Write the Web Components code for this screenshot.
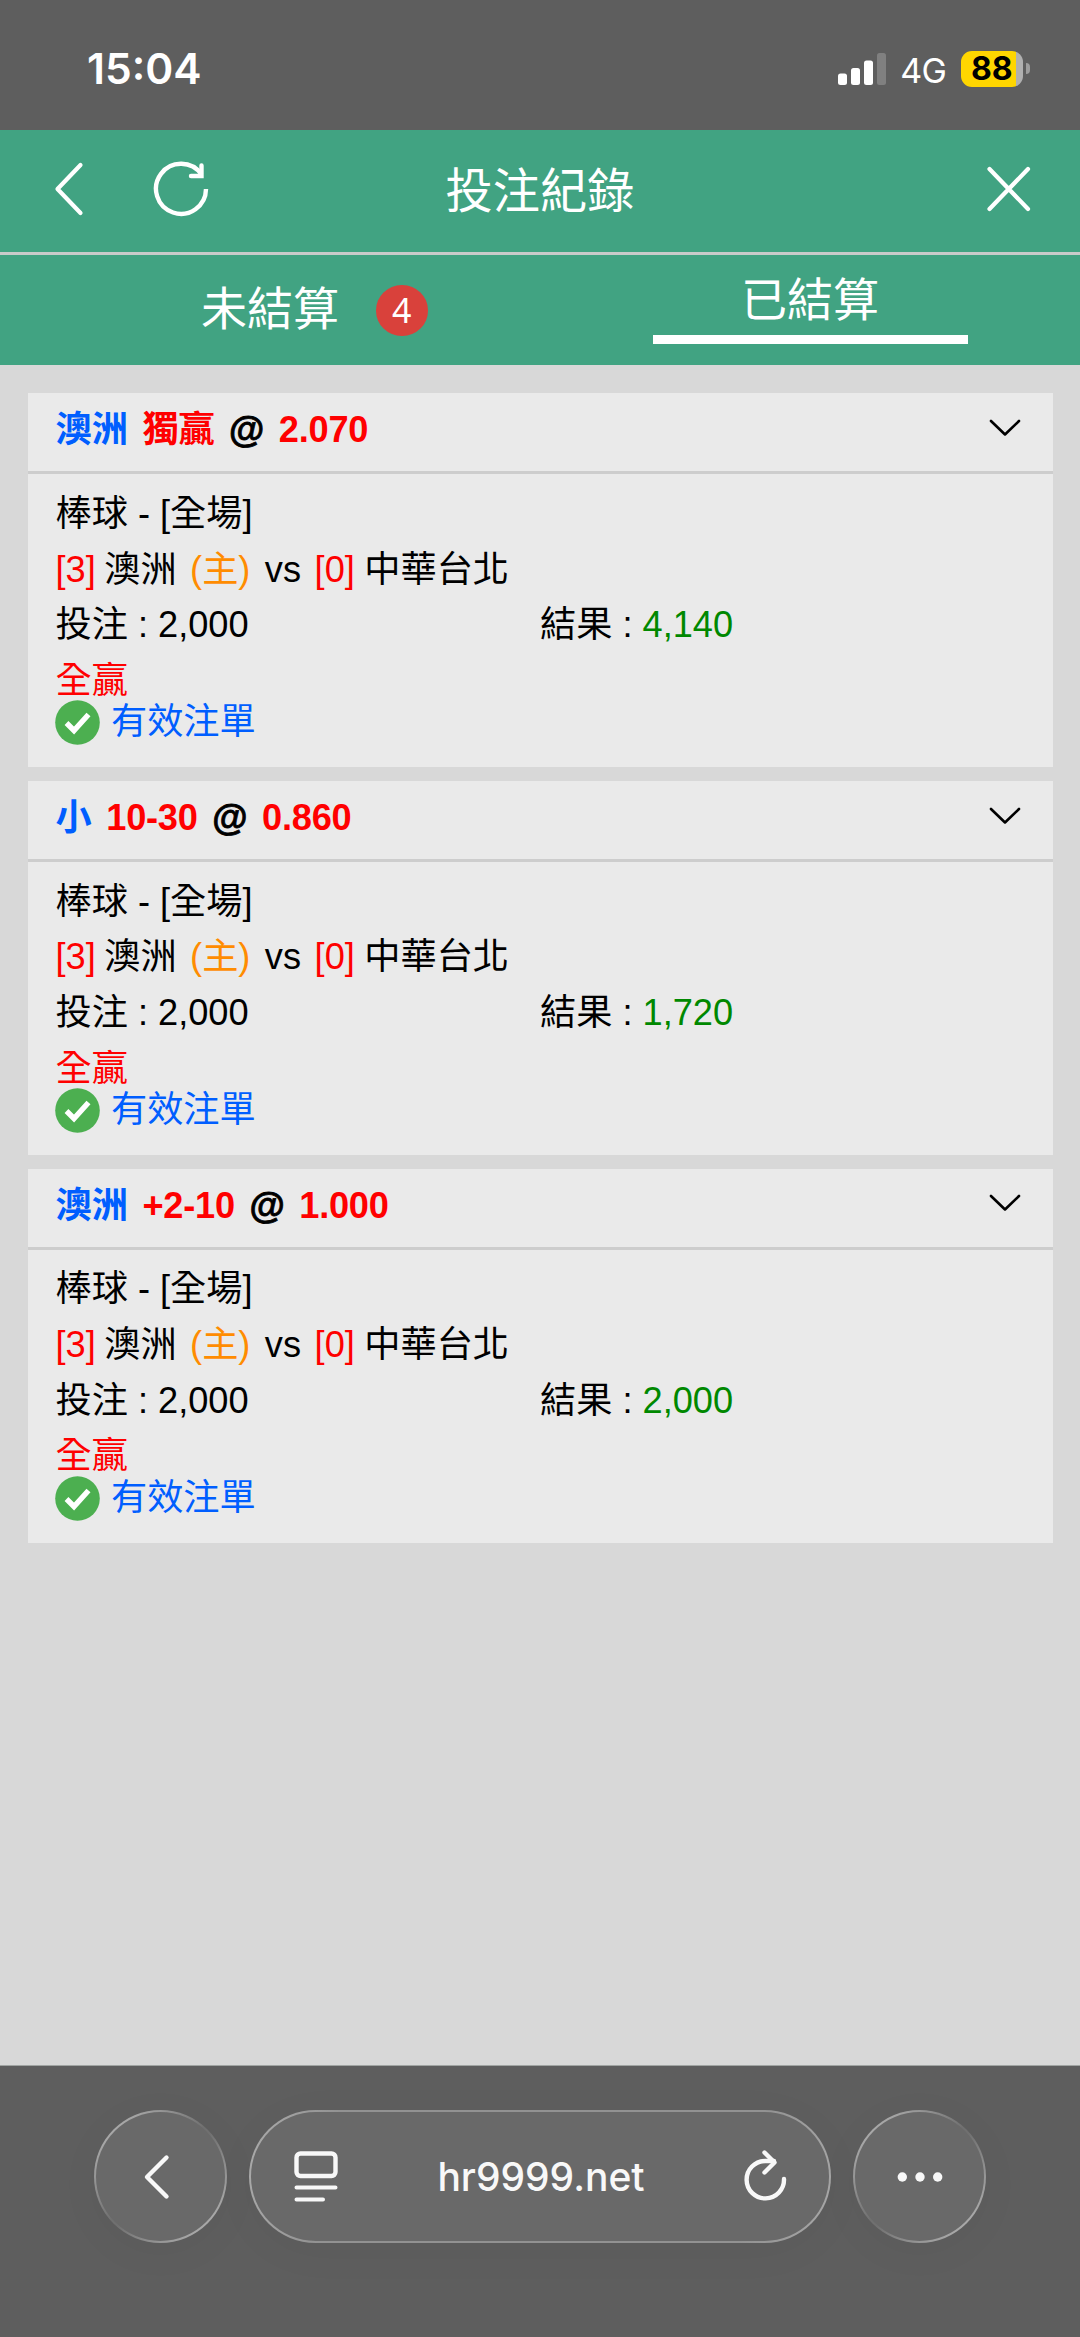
<!DOCTYPE html>
<html lang="zh-Hant">
<head>
<meta charset="utf-8">
<title>投注紀錄</title>
<style>
	body {
		margin: 0;
		background-color: #d8d8d8;
		font-family: "Liberation Sans", "Noto Sans CJK TC", sans-serif;
	}
	bet-app {
		--green: #41a382;
		--chrome: #5e5e5e;
	}
</style>
</head>
<body>

<bet-app>
	<status-bar slot="top" time="15:04" network="4G" battery="88"></status-bar>
	<page-header slot="top">投注紀錄</page-header>
	<tab-bar slot="top">
		<tab-item count="4">未結算</tab-item>
		<tab-item selected>已結算</tab-item>
	</tab-bar>

	<bet-card team="澳洲" pick="獨贏" odds="2.070" stake="2,000" result="4,140"></bet-card>
	<bet-card team="小" pick="10-30" odds="0.860" stake="2,000" result="1,720"></bet-card>
	<bet-card team="澳洲" pick="+2-10" odds="1.000" stake="2,000" result="2,000"></bet-card>

	<browser-bar slot="bottom">hr9999.net</browser-bar>
</bet-app>

<script>
// Attaches an open shadow root filled with the given markup
function render(el, html) {
	let tmpl = document.createElement('template');
	tmpl.innerHTML = html;
	el.attachShadow({mode: 'open'}).appendChild(tmpl.content.cloneNode(true));
}

class BetApp extends HTMLElement {

	constructor() {
		super();
		render(this, `
			<style>
				:host {
					display: flex;
					flex-direction: column;
					height: 2337px;
				}
				main {
					box-sizing: border-box;
					display: flex;
					flex: 1;
					flex-direction: column;
					gap: 13.7px;
					padding: 28px 27.5px 0;
				}
			</style>
			<slot name="top"></slot>
			<main><slot></slot></main>
			<slot name="bottom"></slot>
		`);
	}

}

class StatusBar extends HTMLElement {

	constructor() {
		super();
		render(this, `
			<style>
				:host {
					align-items: center;
					background-color: var(--chrome);
					box-sizing: border-box;
					color: #fff;
					display: flex;
					font-family: Inter, sans-serif;
					height: 130px;
					justify-content: space-between;
					padding: 7px 50.5px 0 87px;
				}
				.time {
					font-size: 42.5px;
					font-weight: 600;
				}
				.right {
					align-items: center;
					display: flex;
				}
				.network {
					font-size: 34px;
					letter-spacing: -0.5px;
					margin: 3px 14px 0 14px;
				}
				.battery {
					align-items: center;
					background: linear-gradient(90deg, #ffd600 55px, #b0b0b0 55px);
					border-radius: 11px;
					color: #000;
					display: flex;
					font-size: 32px;
					font-weight: 700;
					height: 36px;
					justify-content: center;
					width: 62.5px;
				}
				.nub {
					background-color: #9d9d9d;
					border-radius: 0 5px 5px 0;
					height: 11px;
					margin-left: 2.5px;
					width: 4px;
				}
			</style>
			<span class="time"></span>
			<div class="right">
				<svg width="48" height="33" fill="#fff">
					<rect x="0" y="21.5" width="9" height="11.5" rx="2.5"/>
					<rect x="13" y="16" width="9" height="17" rx="2.5"/>
					<rect x="26" y="8.5" width="9" height="24.5" rx="2.5"/>
					<rect x="39" y="1" width="9" height="32" rx="2.5" fill="#808080"/>
				</svg>
				<span class="network"></span>
				<span class="battery"></span>
				<span class="nub"></span>
			</div>
		`);
	}

	connectedCallback() {
		this.shadowRoot.querySelector('.time').textContent = this.getAttribute('time');
		this.shadowRoot.querySelector('.network').textContent = this.getAttribute('network');
		this.shadowRoot.querySelector('.battery').textContent = this.getAttribute('battery');
	}

}

class PageHeader extends HTMLElement {

	constructor() {
		super();
		render(this, `
			<style>
				:host {
					align-items: center;
					background-color: var(--green);
					border-bottom: 3px solid #c9cbca;
					box-sizing: border-box;
					color: #fff;
					display: grid;
					grid-template-columns: 1fr auto 1fr;
					height: 125px;
					padding: 0 48px 0 54px;
				}
				.left {
					display: flex;
					gap: 69px;
					padding-bottom: 4px;
				}
				h1 {
					font-size: 47.2px;
					font-weight: 400;
					line-height: 60px;
					margin: 2px 6px 0 0;
				}
				.close {
					justify-self: end;
					padding-bottom: 4px;
				}
				svg {
					display: block;
				}
			</style>
			<div class="left">
				<svg width="30" height="56" fill="none" stroke="#fff" stroke-width="4.2" stroke-linecap="round" stroke-linejoin="round">
					<path d="M26.5 4 3.5 28l23 24"/>
				</svg>
				<svg width="56" height="56" fill="none" stroke="#fff" stroke-width="4.4">
					<path d="M53 28A25 25 0 1 1 48.5 13.5"/>
					<path d="M48.5 4.5V15H38" stroke-linecap="round"/>
				</svg>
			</div>
			<h1><slot></slot></h1>
			<svg class="close" width="46" height="46" fill="none" stroke="#fff" stroke-width="4.2" stroke-linecap="round">
				<path d="M3.5 3 42 43M42 3 3.5 43"/>
			</svg>
		`);
	}

}

class TabBar extends HTMLElement {

	constructor() {
		super();
		render(this, `
			<style>
				:host {
					background-color: var(--green);
					display: grid;
					grid-template-columns: 1fr 1fr;
					height: 110.4px;
				}
			</style>
			<slot></slot>
		`);
	}

}

class TabItem extends HTMLElement {

	constructor() {
		super();
		render(this, `
			<style>
				:host {
					align-items: center;
					color: #fff;
					display: flex;
					flex-direction: column;
					font-size: 46px;
					font-weight: 400;
					padding-top: 24px;
				}
				:host([selected]) {
					padding-top: 15px;
				}
				.label {
					line-height: 60px;
					position: relative;
				}
				.count {
					background-color: #d9413b;
					border-radius: 50%;
					display: none;
					font-family: "Noto Sans", sans-serif;
					font-size: 34px;
					font-weight: 400;
					height: 50.5px;
					left: 175px;
					line-height: 50px;
					position: absolute;
					text-align: center;
					top: 6px;
					width: 51.5px;
				}
				:host([count]) .count {
					display: block;
				}
				.line {
					background-color: #fff;
					display: none;
					height: 8.5px;
					margin-top: 5px;
					width: 315px;
				}
				:host([selected]) .line {
					display: block;
				}
			</style>
			<span class="label"><slot></slot><span class="count"></span></span>
			<span class="line"></span>
		`);
	}

	connectedCallback() {
		this.shadowRoot.querySelector('.count').textContent = this.getAttribute('count') || '';
	}

}

class BetCard extends HTMLElement {

	constructor() {
		super();
		render(this, `
			<style>
				:host {
					background-color: #eaeaea;
					box-sizing: border-box;
					color: #000;
					display: block;
					font-size: 36.2px;
					height: 374px;
				}
				header {
					align-items: center;
					border-bottom: 3px solid #cdcdcd;
					box-sizing: border-box;
					display: flex;
					font-weight: 700;
					gap: 14.6px;
					height: 81px;
					line-height: 56px;
					padding: 0 31px 4px 28px;
				}
				header svg {
					margin: 0 0 5px auto;
				}
				.at {
					-webkit-text-stroke: 0.8px #000;
				}
				.pick, .odds {
					letter-spacing: -0.25px;
				}
				.body {
					padding: 11.7px 28px 0;
				}
				.row {
					display: flex;
					height: 55.6px;
					line-height: 56px;
					white-space: pre;
				}
				.row > span {
					flex: none;
				}
				.half {
					width: 484.5px;
				}
				.team, .valid {
					color: #005eff;
				}
				.pick, .odds, .score, .outcome {
					color: #f00;
				}
				.home {
					margin-left: 8.5px;
				}
				.host {
					color: #ff8c00;
					margin: 0 14.4px 0 13.5px;
				}
				.vs {
					margin-right: 13.6px;
				}
				.away {
					margin-left: 9.5px;
				}
				.win {
					color: #008800;
				}
				.outcome {
					height: 47.3px;
				}
				.valid {
					align-items: center;
					display: flex;
					gap: 11px;
					line-height: 43px;
					margin-left: -0.5px;
				}
				.valid span {
					padding-bottom: 2px;
				}
			</style>
			<header>
				<span class="team"></span>
				<span class="pick"></span>
				<span class="at">@</span>
				<span class="odds"></span>
				<svg width="34" height="20" fill="none" stroke="#000" stroke-width="2.6" stroke-linecap="round" stroke-linejoin="round">
					<path d="M3 3 17 16.500 31 3"/>
				</svg>
			</header>
			<div class="body">
				<div class="row">棒球 - [全場]</div>
				<div class="row"><span class="score">[3]</span><span class="home">澳洲</span><span class="host">(主)</span><span class="vs">vs</span><span class="score">[0]</span><span class="away">中華台北</span></div>
				<div class="row"><span class="half">投注 : <span class="stake"></span></span><span>結果 : <span class="win"></span></span></div>
				<div class="row outcome">全贏</div>
				<div class="valid">
					<svg width="45" height="45">
						<circle cx="22.500" cy="22.500" r="22.300" fill="#4caf50"/>
						<path d="M11.500 23 19 30.500 33.500 14.500" fill="none" stroke="#fff" stroke-width="5.4"/>
					</svg>
					<span>有效注單</span>
				</div>
			</div>
		`);
	}

	connectedCallback() {
		['team', 'pick', 'odds', 'stake'].forEach(name => {
			this.shadowRoot.querySelector('.' + name).textContent = this.getAttribute(name);
		});
		this.shadowRoot.querySelector('.win').textContent = this.getAttribute('result');
	}

}

class BrowserBar extends HTMLElement {

	constructor() {
		super();
		render(this, `
			<style>
				:host {
					background-color: var(--chrome);
					border-top: 1px solid #a0a4a2;
					box-sizing: border-box;
					color: #f8f8f8;
					display: flex;
					font-family: Inter, sans-serif;
					gap: 22px;
					height: 272px;
					justify-content: center;
					padding-top: 44px;
				}
				/* glass rim: brighter at top left and bottom right */
				.glass {
					align-items: center;
					background:
						linear-gradient(#696969, #696969) padding-box,
						linear-gradient(135deg, #a8a8a8 15%, #707070 48%, #707070 52%, #a8a8a8 85%) border-box;
					border: 2px solid transparent;
					border-radius: 67px;
					box-shadow: 0 8px 50px rgba(0, 0, 0, 0.03);
					box-sizing: border-box;
					display: flex;
					height: 133px;
					justify-content: center;
					width: 133px;
				}
				.address {
					background:
						linear-gradient(#696969, #696969) padding-box,
						linear-gradient(100deg, #a8a8a8 2%, #929292 15%, #929292 85%, #a8a8a8) border-box;
					justify-content: space-between;
					padding: 0 42px 0 42px;
					width: 582px;
				}
				.url {
					font-size: 39px;
					font-weight: 500;
				}
				svg {
					fill: none;
					stroke: #f8f8f8;
					stroke-linecap: round;
					stroke-linejoin: round;
					stroke-width: 4.4;
				}
			</style>
			<div class="glass">
				<svg width="28" height="46" style="margin-right: 8px">
					<path d="M23.500 3.500 4 23l19.500 19.500"/>
				</svg>
			</div>
			<div class="glass address">
				<svg width="46" height="56">
					<rect x="3.500" y="4.500" width="39" height="22.500" rx="4"/>
					<path d="M3.500 38.500H42.500M3.500 50.500H30" stroke-width="4"/>
				</svg>
				<span class="url"><slot></slot></span>
				<svg width="44" height="56">
					<path d="M41 30A18.700 18.700 0 1 1 22.300 12H31"/>
					<path d="M21.500 3.500 31.500 13.500 21.500 23.500"/>
				</svg>
			</div>
			<div class="glass">
				<svg width="50" height="12" style="fill: #f8f8f8; stroke: none">
					<circle cx="7.300" cy="6" r="4.700"/>
					<circle cx="25" cy="6" r="4.700"/>
					<circle cx="42.700" cy="6" r="4.700"/>
				</svg>
			</div>
		`);
	}

}

customElements.define('bet-app', BetApp);
customElements.define('status-bar', StatusBar);
customElements.define('page-header', PageHeader);
customElements.define('tab-bar', TabBar);
customElements.define('tab-item', TabItem);
customElements.define('bet-card', BetCard);
customElements.define('browser-bar', BrowserBar);
</script>
</body>
</html>
